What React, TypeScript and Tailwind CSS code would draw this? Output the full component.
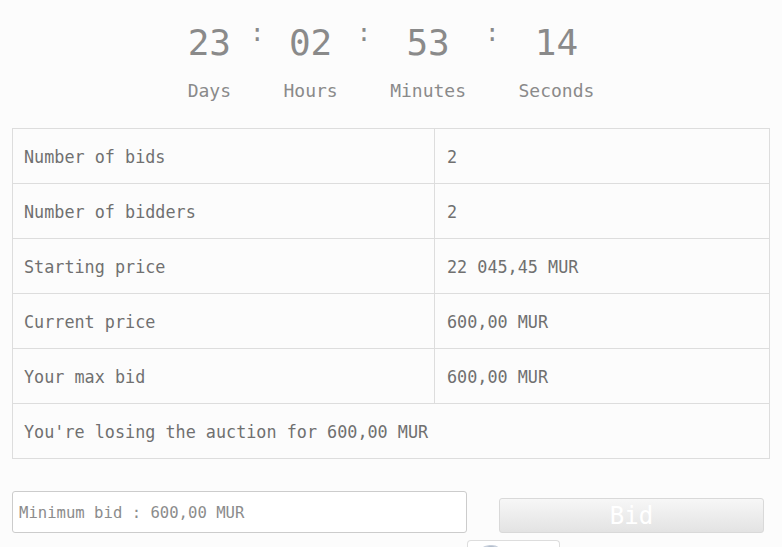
import React from "react";

const mono = "font-['DejaVu_Sans_Mono','Liberation_Mono',monospace]";

const countdown = [
  { value: "23", label: "Days" },
  { value: "02", label: "Hours" },
  { value: "53", label: "Minutes" },
  { value: "14", label: "Seconds" },
];

const rows = [
  { label: "Number of bids", value: "2" },
  { label: "Number of bidders", value: "2" },
  { label: "Starting price", value: "22 045,45 MUR" },
  { label: "Current price", value: "600,00 MUR" },
  { label: "Your max bid", value: "600,00 MUR" },
];

function Countdown() {
  return (
    <div className="flex items-start justify-center gap-[19px] pt-[25px]">
      {countdown.map((unit, i) => (
        <React.Fragment key={unit.label}>
          {i > 0 ? (
            <span className="-mt-[4px] text-[24px] leading-none text-[#8a8a8a]">:</span>
          ) : null}
          <div className="flex flex-col items-center">
            <span className="text-[36px] leading-none text-[#8a8a8a]">{unit.value}</span>
            <span className="mt-[21px] text-[18px] leading-none text-[#8a8a8a]">{unit.label}</span>
          </div>
        </React.Fragment>
      ))}
    </div>
  );
}

function AuctionTable() {
  return (
    <div className="mx-[12px] mt-[28px] border border-[#dddddd] text-[16.8px] text-[#707070]">
      {rows.map((row) => (
        <div key={row.label} className="flex h-[55px] items-stretch border-b border-[#dddddd]">
          <div className="flex w-[422px] items-center border-r border-[#dddddd] pl-[11px] pt-[4px]">{row.label}</div>
          <div className="flex items-center pl-[12px] pt-[4px]">{row.value}</div>
        </div>
      ))}
      <div className="flex h-[54px] items-center pl-[11px] pt-[4px]">You're losing the auction for 600,00 MUR</div>
    </div>
  );
}

function BidForm() {
  return (
    <div className="mt-[32px] flex items-end gap-[32px] pl-[12px]">
      <input
        type="text"
        placeholder="Minimum bid : 600,00 MUR"
        className="h-[42px] w-[455px] rounded-[3px] border border-[#cccccc] bg-white px-[6px] pt-[1px] text-[15.6px] text-[#777777] outline-none placeholder:text-[#8c8c8c]"
      />
      <button
        type="button"
        className="h-[35px] w-[265px] rounded-[3px] border border-[#d9d9d9] bg-gradient-to-b from-[#f7f7f7] to-[#e3e3e3] text-[24px] leading-none text-white"
      >
        Bid
      </button>
    </div>
  );
}

export default function App() {
  return (
    <div className={`${mono} h-[547px] w-[782px] overflow-hidden bg-[#fcfcfc]`}>
      <Countdown />
      <AuctionTable />
      <BidForm />
      {/* half-visible widget peeking under the form */}
      <div className="ml-[467px] mt-[7px] flex h-[20px] w-[93px] items-start rounded-t-[4px] border border-b-0 border-[#dddddd] bg-white pl-[8px] pt-[2px]">
        <svg width="26" height="12" viewBox="0 0 26 12">
          <path d="M2 12 C3 5 8 2 16 2 C20 2 23 4 24 6 L24 12 Z" fill="#c8d0dc" />
          <path d="M4 12 C5 7 9 4 15 4 C19 4 21 5 22 7" fill="none" stroke="#9aa6b8" strokeWidth="1" />
        </svg>
      </div>
    </div>
  );
}
